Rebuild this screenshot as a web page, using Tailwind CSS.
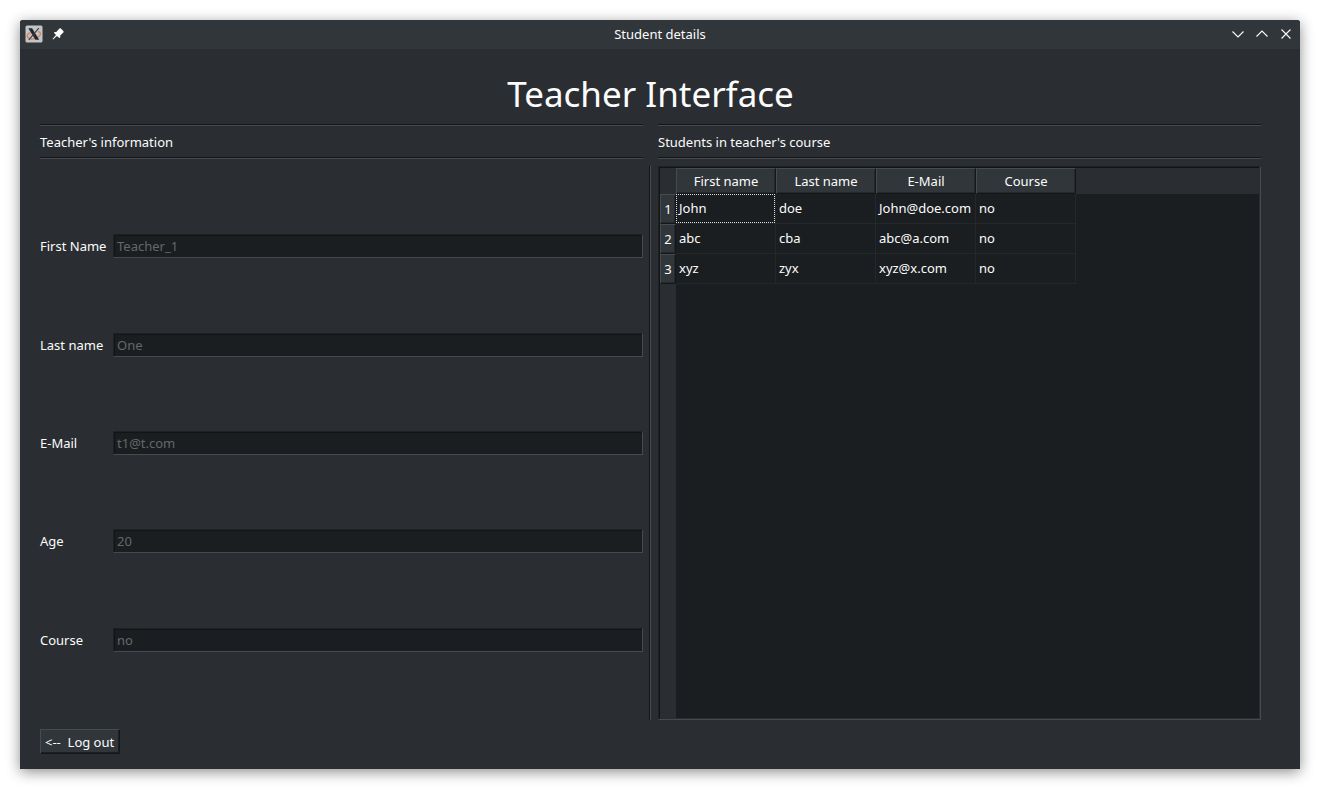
<!DOCTYPE html>
<html lang="en">
<head>
<meta charset="utf-8">
<title>Student details</title>
<script src="https://cdn.jsdelivr.net/npm/@tailwindcss/browser@4"></script>
</head>
<body class="bg-white w-[1320px] h-[789px] overflow-hidden p-5 font-['Noto_Sans',sans-serif] text-[13px] leading-[18px] text-[#fcfcfc]">
<div class="w-[1280px] h-[749px] bg-[#2a2e32] rounded-t-[3px] flex flex-col shadow-[0_3px_14px_rgba(0,0,0,0.45)]">
  <header class="h-[29px] shrink-0 bg-[#31363b] rounded-t-[3px] grid grid-cols-[1fr_auto_1fr] items-center px-[6px] pb-px">
    <div class="flex items-center gap-[10px]">
      <svg class="w-[18px] h-[18px] -ml-px -mr-px" viewBox="0 0 18 18"><rect x=".5" y=".5" width="17" height="17" rx="1.5" fill="#c0c5c8"/><path d="M5.5 7.6C2.8 8.6 1.6 10.6 2.6 12.2c1 1.7 4.2 2.2 7.4 1.2 3.6-1.1 6-3.4 5.4-5.2-.3-.9-1.1-1.4-2.4-1.5" fill="none" stroke="#ec7a4c" stroke-width="1.3"/><path d="M3.3 3.2h3.8L14.2 14.8h-3.8z" fill="#24282b"/><path d="M13.8 3.2L3.8 14.8" stroke="#3b4044" stroke-width="1.1"/></svg>
      <svg class="w-[12px] h-[12px]" viewBox="0 0 12 12" fill="#fcfcfc"><path d="M8.6.2L11.6 3.2 11.4 4.4 8.2 7.6 8.3 9.2 7.3 10 4.9 7.9 1.1 11.5.5 10.9 4 7.1 1.9 4.8 2.7 3.9 4.3 3.9 7.4.5z"/></svg>
    </div>
    <div>Student details</div>
    <div class="flex justify-end gap-2">
      <svg class="w-4 h-4" viewBox="0 0 16 16" fill="none" stroke="#fcfcfc" stroke-width="1.1"><path d="M2.5 5.5L8 11l5.5-5.5"/></svg>
      <svg class="w-4 h-4" viewBox="0 0 16 16" fill="none" stroke="#fcfcfc" stroke-width="1.1"><path d="M2.5 10.5L8 5l5.5 5.5"/></svg>
      <svg class="w-4 h-4" viewBox="0 0 16 16" fill="none" stroke="#fcfcfc" stroke-width="1.1"><path d="M3.5 3.5l9 9M12.5 3.5l-9 9"/></svg>
    </div>
  </header>
  <main class="pl-5 pr-[39px] flex flex-col">
    <h1 class="h-[75px] pt-[20px] text-center text-[35px] leading-[50px]">Teacher Interface</h1>
    <div class="flex gap-[15px]">
      <div class="w-[603px] h-[35px] border-y border-t-[#141618] border-b-[#474b50]">
        <div class="h-[33px] border-y border-t-[#474b50] border-b-[#141618] pt-[7px]">Teacher's information</div>
      </div>
      <div class="w-[603px] h-[35px] border-y border-t-[#141618] border-b-[#474b50]">
        <div class="h-[33px] border-y border-t-[#474b50] border-b-[#141618] pt-[7px]">Students in teacher's course</div>
      </div>
    </div>
    <div class="flex h-[554px] mt-[7px]">
      <form class="w-[603px] pt-[68px] flex flex-col">
        <label class="flex items-center h-[24px] mb-[75px]"><span class="w-[73px]">First Name</span><span class="w-[530px] h-[24px] bg-[#1b1e20] border border-t-[#1f2225] border-l-[#1f2225] border-r-[#474b50] border-b-[#474b50] shadow-[inset_1px_1px_0_#121415] pl-[3px] leading-[22px] text-[#656769]">Teacher_1</span></label>
        <label class="flex items-center h-[24px] mb-[74px]"><span class="w-[73px]">Last name</span><span class="w-[530px] h-[24px] bg-[#1b1e20] border border-t-[#1f2225] border-l-[#1f2225] border-r-[#474b50] border-b-[#474b50] shadow-[inset_1px_1px_0_#121415] pl-[3px] leading-[22px] text-[#656769]">One</span></label>
        <label class="flex items-center h-[24px] mb-[74px]"><span class="w-[73px]">E-Mail</span><span class="w-[530px] h-[24px] bg-[#1b1e20] border border-t-[#1f2225] border-l-[#1f2225] border-r-[#474b50] border-b-[#474b50] shadow-[inset_1px_1px_0_#121415] pl-[3px] leading-[22px] text-[#656769]">t1@t.com</span></label>
        <label class="flex items-center h-[24px] mb-[75px]"><span class="w-[73px]">Age</span><span class="w-[530px] h-[24px] bg-[#1b1e20] border border-t-[#1f2225] border-l-[#1f2225] border-r-[#474b50] border-b-[#474b50] shadow-[inset_1px_1px_0_#121415] pl-[3px] leading-[22px] text-[#656769]">20</span></label>
        <label class="flex items-center h-[24px]"><span class="w-[73px]">Course</span><span class="w-[530px] h-[24px] bg-[#1b1e20] border border-t-[#1f2225] border-l-[#1f2225] border-r-[#474b50] border-b-[#474b50] shadow-[inset_1px_1px_0_#121415] pl-[3px] leading-[22px] text-[#656769]">no</span></label>
      </form>
      <div class="w-[2px] ml-[6px] mr-[7px] border-l border-l-[#141618] bg-[#474b50]"></div>
      <div class="w-[603px] border border-t-[#1f2225] border-l-[#1f2225] border-r-[#474b50] border-b-[#474b50]">
        <div class="h-full border-t border-l border-t-[#121415] border-l-[#121415] border-r border-b border-r-[#2a2e32] border-b-[#2a2e32] bg-[#1b1e20] flex flex-col">
          <div class="h-[26px] shrink-0 bg-[#2a2e32] flex text-center leading-[24px]">
            <div class="w-[16px]"></div>
            <div class="w-[100px] bg-[#31363b] border border-t-[#474b50] border-l-[#474b50] border-r-[#141618] border-b-[#141618] shadow-[inset_-1px_-1px_0_#25292c]">First name</div>
            <div class="w-[100px] bg-[#31363b] border border-t-[#474b50] border-l-[#474b50] border-r-[#141618] border-b-[#141618] shadow-[inset_-1px_-1px_0_#25292c]">Last name</div>
            <div class="w-[100px] bg-[#31363b] border border-t-[#474b50] border-l-[#474b50] border-r-[#141618] border-b-[#141618] shadow-[inset_-1px_-1px_0_#25292c]">E-Mail</div>
            <div class="w-[100px] bg-[#31363b] border border-t-[#474b50] border-l-[#474b50] border-r-[#141618] border-b-[#141618] shadow-[inset_-1px_-1px_0_#25292c]">Course</div>
          </div>
          <div class="flex flex-1">
            <div class="w-[16px] bg-[#2a2e32] text-center leading-[29px]">
              <div class="h-[30px] bg-[#31363b] border border-t-[#474b50] border-l-[#474b50] border-r-[#141618] border-b-[#141618] shadow-[inset_-1px_-1px_0_#25292c]">1</div>
              <div class="h-[30px] bg-[#31363b] border border-t-[#474b50] border-l-[#474b50] border-r-[#141618] border-b-[#141618] shadow-[inset_-1px_-1px_0_#25292c]">2</div>
              <div class="h-[30px] bg-[#31363b] border border-t-[#474b50] border-l-[#474b50] border-r-[#141618] border-b-[#141618] shadow-[inset_-1px_-1px_0_#25292c]">3</div>
            </div>
            <div class="grid grid-cols-[100px_100px_100px_100px] auto-rows-[30px] content-start leading-[29px] *:border-r *:border-b *:border-[#25282b] *:pl-[3px]">
              <div class="relative">John<svg class="absolute left-0 top-0 w-[99px] h-[29px]" viewBox="0 0 99 29" fill="none" stroke="#dcdddd" stroke-dasharray="1 1" shape-rendering="crispEdges"><path d="M0 .5h99M0 28.5h99M.5 0v29M98.5 0v29"/></svg></div>
              <div>doe</div><div>John@doe.com</div><div>no</div>
              <div>abc</div><div>cba</div><div>abc@a.com</div><div>no</div>
              <div>xyz</div><div>zyx</div><div>xyz@x.com</div><div>no</div>
            </div>
          </div>
        </div>
      </div>
    </div>
    <button class="mt-[9px] w-[80px] h-[25px] text-left pl-[4px] leading-[24px] whitespace-pre bg-[#31363b] border border-t-[#474b50] border-l-[#474b50] border-r-[#141618] border-b-[#141618] shadow-[inset_-1px_-1px_0_#1d2023]">&lt;--  Log out</button>
  </main>
</div>
</body>
</html>
